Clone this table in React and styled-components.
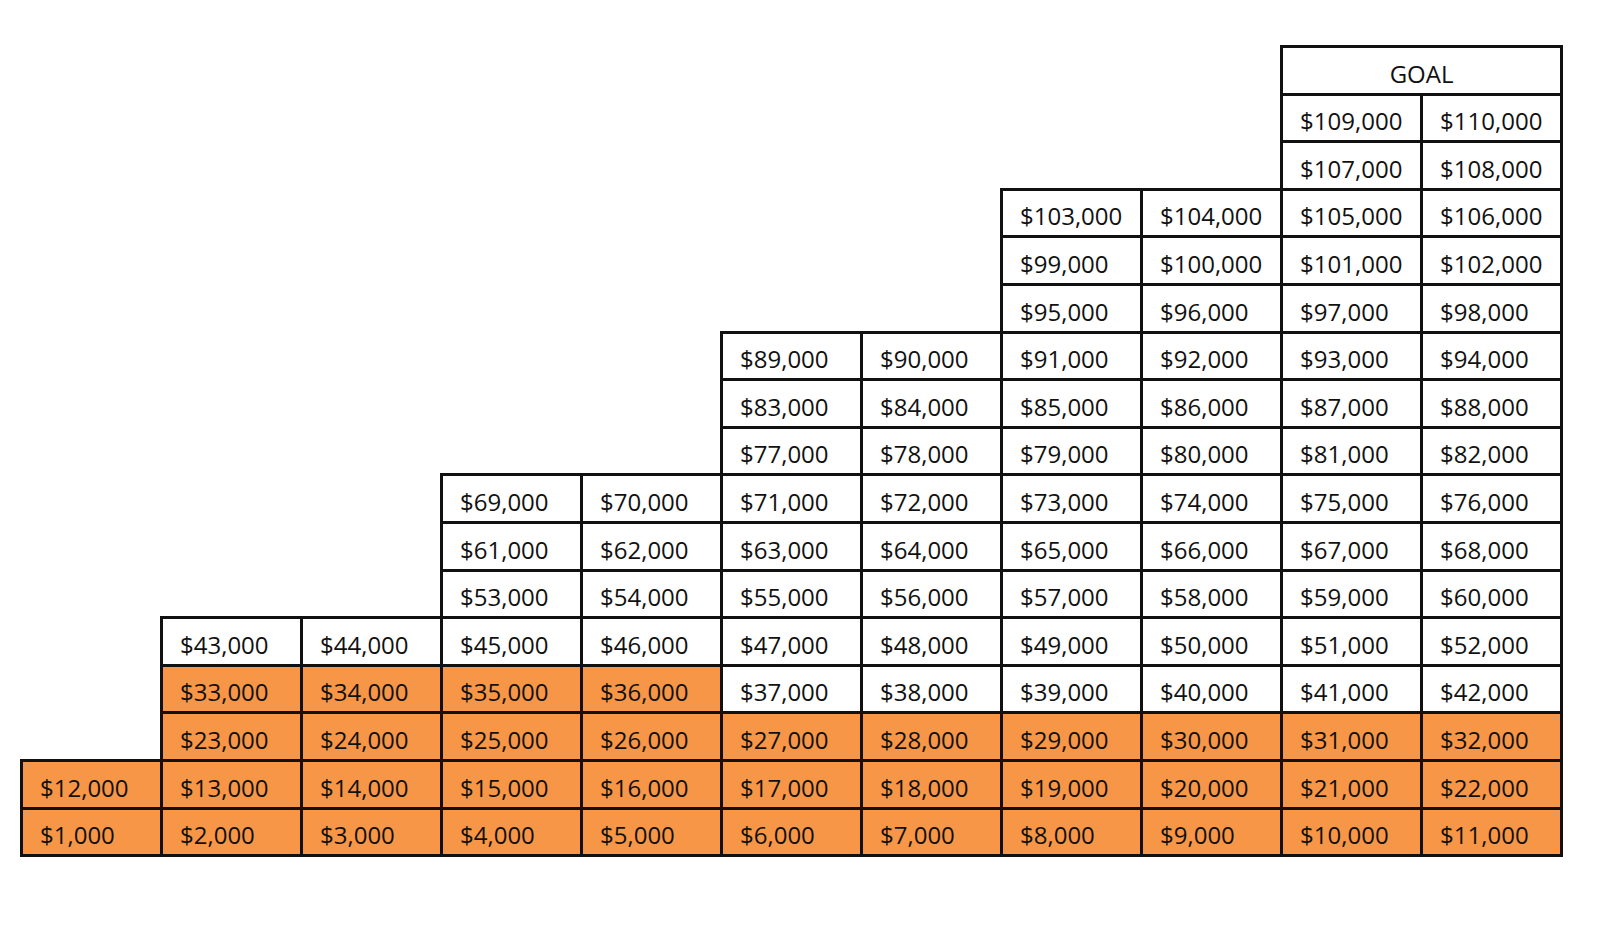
import React from 'react'
import styled, { createGlobalStyle } from 'styled-components'

const GlobalStyle = createGlobalStyle`
  html, body {
    margin: 0;
    padding: 0;
    background: #fff;
  }
  body {
    font-family: "Open Sans", "Liberation Sans", sans-serif;
  }
`

const Page = styled.div`
  width: 1600px;
  height: 926px;
  padding: 45px 0 0 20px;
  box-sizing: border-box;
`

const Chart = styled.table`
  border-collapse: collapse;
  table-layout: fixed;
  width: 1541px;
`

const Col = styled.col`
  width: 140px;
`

const Row = styled.tr`
  height: 47.6px;
`

const Cell = styled.td`
  box-sizing: border-box;
  padding: 10px 0 4px 17px;
  font-size: 24px;
  line-height: 30px;
  color: #111;
  white-space: nowrap;
  overflow: hidden;
  vertical-align: bottom;
  border: ${p => (p.$blank ? 'none' : '3px solid #111')};
  background: ${p => (p.$orange ? '#f79646' : 'transparent')};
  text-align: ${p => (p.$center ? 'center' : 'left')};
  padding-left: ${p => (p.$center ? '0' : '17px')};
`

const COLS = 11

// each row: first filled column, first value, and how many of the cells are orange
const rows = [
  { start: 9, from: 109 },
  { start: 9, from: 107 },
  { start: 7, from: 103 },
  { start: 7, from: 99 },
  { start: 7, from: 95 },
  { start: 5, from: 89 },
  { start: 5, from: 83 },
  { start: 5, from: 77 },
  { start: 3, from: 69 },
  { start: 3, from: 61 },
  { start: 3, from: 53 },
  { start: 1, from: 43 },
  { start: 1, from: 33, orange: 4 },
  { start: 1, from: 23, orange: 10 },
  { start: 0, from: 12, orange: 11 },
  { start: 0, from: 1, orange: 11 },
]

const money = n => `$${n.toLocaleString('en-US')},000`

export default function App() {
  return (
    <>
      <GlobalStyle />
      <Page>
        <Chart>
          <colgroup>
            {Array.from({ length: COLS }, (_, i) => (
              <Col key={i} />
            ))}
          </colgroup>
          <tbody>
            <Row>
              <Cell colSpan={9} $blank />
              <Cell colSpan={2} $center>GOAL</Cell>
            </Row>
            {rows.map(r => (
              <Row key={r.from}>
                {Array.from({ length: COLS }, (_, c) => {
                  if (c < r.start) return <Cell key={c} $blank />
                  const idx = c - r.start
                  return (
                    <Cell key={c} $orange={r.orange && idx < r.orange}>
                      {money(r.from + idx)}
                    </Cell>
                  )
                })}
              </Row>
            ))}
          </tbody>
        </Chart>
      </Page>
    </>
  )
}
